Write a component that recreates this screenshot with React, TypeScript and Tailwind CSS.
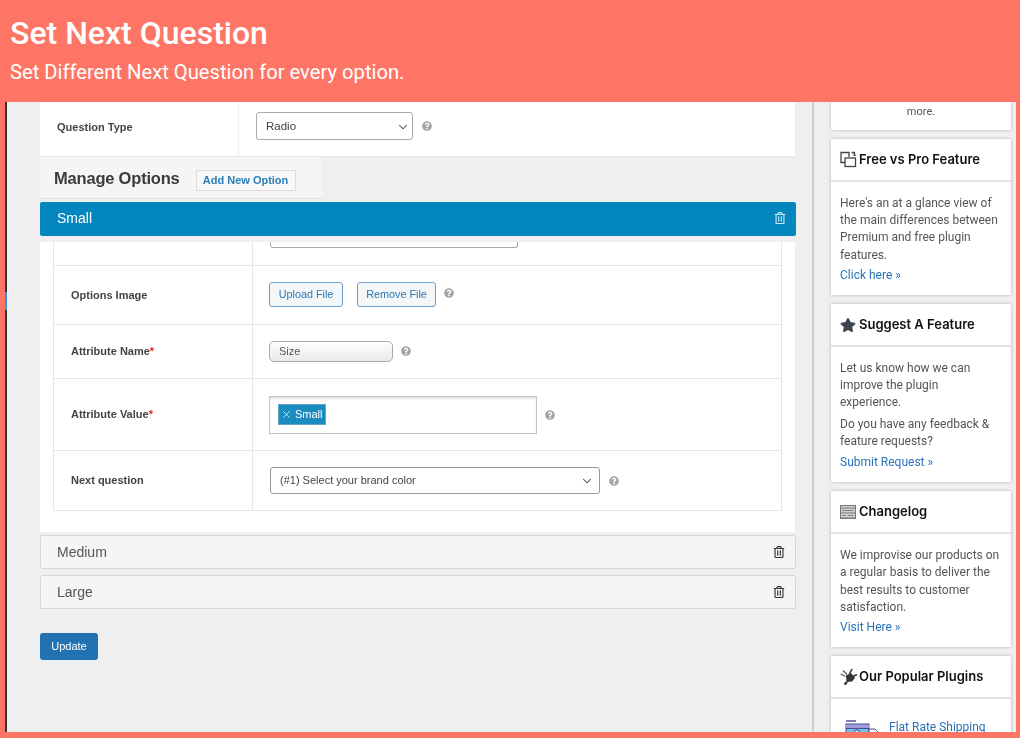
import { FaQuestionCircle, FaRegTrashAlt, FaStar } from "react-icons/fa";
import { ChevronDown, X } from "lucide-react";

function Help({ className = "" }: { className?: string }) {
  return <FaQuestionCircle className={`text-[10px] text-[#a5a5a5] ${className}`} />;
}

function FreeIcon() {
  return (
    <svg width="17" height="17" viewBox="0 0 17 17" fill="none" stroke="#444" strokeWidth="1.3">
      <path d="M5 11.5H1V1.5h8V6" />
      <rect x="5" y="7" width="10.5" height="8.5" fill="#fff" />
      <path d="M11.5 1.5h3V5" />
      <path d="M13.2 3.6l1.3 1.4 1.3-1.4" strokeWidth="1" />
    </svg>
  );
}

function ChangelogIcon() {
  return (
    <svg width="16" height="14" viewBox="0 0 16 14">
      <rect x="0.5" y="0.5" width="15" height="13" fill="#ced2d4" stroke="#777" />
      <path d="M1 3h14M1 8h14M1 13h14" stroke="#777" />
      <path d="M2.5 5.5h11M2.5 10.5h4M8.5 10.5h5" stroke="#555" strokeDasharray="1.2 .7" />
    </svg>
  );
}

function PlugIcon() {
  return (
    <svg width="18" height="17" viewBox="0 0 18 17">
      <path d="M6 7.5L11 5l4 5-3 3.5-5.5.5z" fill="#2f3338" />
      <path d="M7 14l-2.5 2.5" stroke="#2f3338" strokeWidth="2.4" />
      <path d="M9.5 6L12 1M13 8.5l4-2" stroke="#2f3338" strokeWidth="1.6" />
      <path d="M0.5 6l5 2.5M3 2.5l4 4" stroke="#555" strokeWidth="1.2" />
    </svg>
  );
}

function ShippingIcon() {
  return (
    <svg width="34" height="20" viewBox="0 0 34 20">
      <path d="M1 1h10" stroke="#5b4a9e" strokeWidth="1.5" />
      <rect x="1" y="4" width="23" height="16" fill="#6fc3ea" stroke="#4c4a8c" />
      <rect x="1" y="5" width="23" height="3" fill="#a49ad6" />
      <path d="M1 8.5h23" stroke="#4c4a8c" />
      <circle cx="12" cy="13" r="3" fill="#dfeaf6" stroke="#4c4a8c" />
      <path d="M24 9h6l3 3v8h-9z" fill="#fff" stroke="#4c4a8c" />
    </svg>
  );
}

const fieldRows = [
  { h: "h-[59px]", label: "Options Image", key: "image" },
  { h: "h-[54px]", label: "Attribute Name", key: "name", required: true },
  { h: "h-[72px]", label: "Attribute Value", key: "value", required: true },
  { h: "h-[59px]", label: "Next question", key: "next" },
];

function RowControl({ kind }: { kind: string }) {
  if (kind === "image") {
    return (
      <div className="mb-px flex items-center">
        <button className="h-[25px] w-[74px] rounded-[3px] border border-[#6f9fce] bg-[#f4f7f8] text-[10.8px] text-[#2f74b5]">Upload File</button>
        <button className="ml-[14px] h-[25px] w-[79px] rounded-[3px] border border-[#6f9fce] bg-[#f4f7f8] text-[10.8px] text-[#2f74b5]">Remove File</button>
        <Help className="mb-1 ml-2" />
      </div>
    );
  }
  if (kind === "name") {
    return (
      <div className="flex items-center">
        <div className="flex h-[21px] w-[124px] items-center rounded-[5px] border border-[#aaa] bg-gradient-to-b from-white to-[#e9e9e9] pl-[9px] text-[11px] text-[#555]">Size</div>
        <Help className="mb-0.5 ml-2" />
      </div>
    );
  }
  if (kind === "value") {
    return (
      <div className="flex items-center">
        <div className="flex h-[38px] w-[268px] items-center border border-[#c4c4c4] bg-white pl-2 shadow-[inset_0_2px_2px_#e4e4e4]">
          <div className="flex h-[21px] w-[48px] items-center border border-[#6aa6c8] bg-[#1b8cc0] pl-[2px] text-[11px] text-white">
            <X size={11} strokeWidth={2} className="text-[#cfe8f4]" />
            <span className="ml-[3px]">Small</span>
          </div>
        </div>
        <Help className="ml-2" />
      </div>
    );
  }
  return (
    <div className="flex items-center">
      <div className="ml-px flex h-[27px] w-[330px] items-center justify-between rounded-[3px] border border-[#999] bg-white pl-[9px] pr-[5px] text-[11px] text-[#444]">
        <span>(#1) Select your brand color</span>
        <ChevronDown size={14} strokeWidth={1.8} className="text-[#444]" />
      </div>
      <Help className="ml-[9px]" />
    </div>
  );
}

function Accordion({ title }: { title: string }) {
  return (
    <div className="flex h-[34px] items-center justify-between rounded-[2px] border border-[#d6d6d6] bg-[#f5f5f5] pl-[16px] pr-[10px] text-[14px] text-[#555]">
      <span>{title}</span>
      <FaRegTrashAlt className="text-[12px] text-[#333]" />
    </div>
  );
}

function SideCard({ icon, title, children }: { icon: React.ReactNode; title: string; children: React.ReactNode }) {
  return (
    <div className="shrink-0 bg-white shadow-[0_0_3px_#b5b5b5]">
      <div className="flex h-[43px] items-center border-b-2 border-[#e2e2e2] pl-[9px] font-['Inter',sans-serif] text-[13px] font-semibold text-[#111]">
        <span className="flex w-[19px] shrink-0">{icon}</span>
        {title}
      </div>
      <div className="pb-[11px] pl-[9px] pr-[11px] pt-[13px] font-['Roboto',sans-serif] text-[12px] leading-[17.2px] text-[#555]">
        {children}
      </div>
    </div>
  );
}

function CardLink({ children }: { children: React.ReactNode }) {
  return <p className="mt-[3px] text-[#2a72b8]">{children}</p>;
}

export default function App() {
  return (
    <div className="flex h-[738px] w-[1020px] flex-col overflow-hidden bg-[#ff7565] pb-[6px]">
      <header className="h-[102px] shrink-0 pl-[10px] pt-[14px] font-['Roboto',sans-serif] text-white">
        <h1 className="text-[32px] font-medium leading-[38px]">Set Next Question</h1>
        <p className="mt-[6px] text-[20.2px] font-normal leading-[28px]">Set Different Next Question for every option.</p>
      </header>

      <div className="ml-[5px] mr-[4px] flex min-h-0 flex-1 overflow-hidden bg-[#efefef] font-['Liberation_Sans',sans-serif] blur-[0.3px]">
        {/* Left edge of the admin window */}
        <div className="flex w-[2px] shrink-0 flex-col bg-[#333]">
          <div className="mt-[190px] h-[18px] bg-[#3b8fd8]" />
        </div>

        {/* Main settings column */}
        <main className="ml-[33px] w-[756px] shrink-0">
          <div className="flex h-[55px] w-[755px] border-b border-[#e6e6e6] bg-white">
            <div className="flex w-[199px] items-center border-r border-[#eee] pb-[4px] pl-[17px] text-[11px] font-bold text-[#444]">Question Type</div>
            <div className="flex items-start pl-[17px] pt-[10px]">
              <div className="flex h-[28px] w-[157px] items-center justify-between rounded-[3px] border border-[#aaa] bg-white pl-[9px] pr-[2px] pt-px text-[11.5px] text-[#444]">
                Radio
                <ChevronDown size={14} strokeWidth={1.8} />
              </div>
              <Help className="ml-[9px] mt-[9px]" />
            </div>
          </div>

          <div className="flex h-[42px] w-[282px] items-center border-b border-[#e2e2e2] bg-[#f5f5f5] pl-[14px]">
            <h2 className="mt-[2px] text-[16.5px] font-bold tracking-[-0.2px] text-[#3a3a3a]">Manage Options</h2>
            <button className="ml-[16px] mt-[5px] h-[21px] w-[100px] border border-[#dcdcdc] bg-[#f8f8f8] text-[11px] font-bold text-[#2a7fb8]">Add New Option</button>
          </div>

          <div className="mt-[3px] flex h-[34px] items-center justify-between rounded-[2px] bg-[#0385be] pb-[2px] pl-[17px] pr-[10px] text-[14px] text-white">
            <span>Small</span>
            <FaRegTrashAlt className="text-[12px] text-[#cfe8f4]" />
          </div>

          <div className="w-[755px] bg-white pb-[21px]">
            <div className="h-[6px] bg-[#f0f0f0]" />
            <div className="mx-[13px] border border-t-0 border-[#e6e6e6]">
              <div className="flex h-[24px] border-b border-[#e6e6e6]">
                <div className="w-[199px] border-r border-[#e6e6e6]" />
                <div className="ml-[17px] h-[6px] w-[248px] rounded-b-[3px] border border-t-0 border-[#aaa]" />
              </div>
              {fieldRows.map((row, i) => (
                <div key={row.key} className={`flex ${row.h} ${i < fieldRows.length - 1 ? "border-b border-[#e6e6e6]" : ""}`}>
                  <div className="flex w-[199px] shrink-0 items-center border-r border-[#e6e6e6] pl-[17px] text-[11px] font-bold text-[#444]">
                    {row.label}
                    {row.required && <span className="text-[#e02020]">*</span>}
                  </div>
                  <div className="flex items-center pl-[16px]">
                    <RowControl kind={row.key} />
                  </div>
                </div>
              ))}
            </div>
          </div>

          <div className="mt-[3px] flex flex-col gap-[6px]">
            <Accordion title="Medium" />
            <Accordion title="Large" />
          </div>

          <button className="mt-[24px] h-[27px] w-[58px] rounded-[3px] bg-[#2271b1] text-[11px] text-white">Update</button>
        </main>

        <div className="ml-[16px] w-[2px] shrink-0 bg-[#cfcfcf]" />

        {/* Sidebar with promo cards */}
        <aside className="ml-[17px] flex w-[180px] shrink-0 flex-col gap-[9px]">
          <div className="flex h-[28px] shrink-0 items-start justify-center bg-white pt-[2px] font-['Roboto',sans-serif] text-[11px] text-[#555] shadow-[0_0_3px_#b5b5b5]">more.</div>
          <SideCard icon={<FreeIcon />} title="Free vs Pro Feature">
            <p>Here's an at a glance view of the main differences between Premium and free plugin features.</p>
            <CardLink>Click here »</CardLink>
          </SideCard>
          <SideCard icon={<FaStar className="text-[16px] text-[#3d4450]" />} title="Suggest A Feature">
            <p>Let us know how we can improve the plugin experience.</p>
            <p className="mt-[4px]">Do you have any feedback &amp; feature requests?</p>
            <p className="mt-[4px] text-[#2a72b8]">Submit Request »</p>
          </SideCard>
          <SideCard icon={<ChangelogIcon />} title="Changelog">
            <p>We improvise our products on a regular basis to deliver the best results to customer satisfaction.</p>
            <CardLink>Visit Here »</CardLink>
          </SideCard>
          <SideCard icon={<PlugIcon />} title="Our Popular Plugins">
            <div className="flex items-start pl-[5px] pt-[8px]">
              <ShippingIcon />
              <span className="ml-[10px] mt-[-1px] text-[#2a72b8]">Flat Rate Shipping</span>
            </div>
          </SideCard>
        </aside>
      </div>
    </div>
  );
}
